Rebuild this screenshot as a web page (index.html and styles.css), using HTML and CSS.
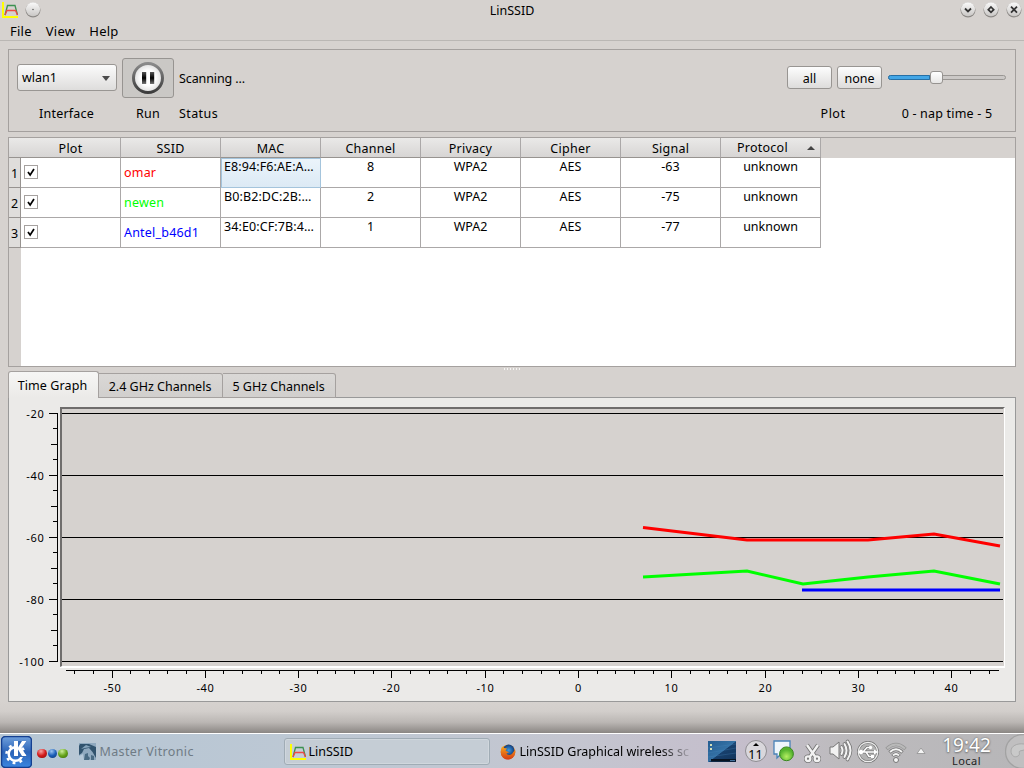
FILE: index.html
```html
<!DOCTYPE html>
<html lang="en">

<head>
    <meta charset="UTF-8">
    <meta name="viewport" content="width=device-width, initial-scale=1.0">
    <title>LinSSID</title>
    <link rel="stylesheet" href="styles.css">
</head>

<body>
    <svg class="defs" width="0" height="0">
        <defs>
            <symbol id="app-icon" viewBox="0 0 16 16">
                <path d="M1 0V15H16" fill="none" stroke="#ff0" stroke-width="2" />
                <path d="M3 13L5.5 3.5H13L15.500 13" fill="none" stroke="#3c9150" stroke-width="1.3" />
                <path d="M3 13L5 8.500H13.500L15.500 13" fill="none" stroke="#ee4a45" stroke-width="1.3" />
            </symbol>
            <linearGradient id="knob" x2="0" y2="1">
                <stop offset="0" stop-color="#fafafa" />
                <stop offset="1" stop-color="#c9c7c5" />
            </linearGradient>
            <linearGradient id="ring" x2="0" y2="1">
                <stop offset="0" stop-color="#8a8a8a" />
                <stop offset="1" stop-color="#3c3c3c" />
            </linearGradient>
            <radialGradient id="face">
                <stop offset="0.5" stop-color="#fff" />
                <stop offset="1" stop-color="#ddd" />
            </radialGradient>
            <linearGradient id="bars" x2="0" y2="1">
                <stop offset="0" stop-color="#555" />
                <stop offset="0.5" stop-color="#000" />
                <stop offset="1" stop-color="#777" />
            </linearGradient>
            <linearGradient id="desk" x2="1" y2="1">
                <stop offset="0" stop-color="#245d91" />
                <stop offset="0.5" stop-color="#3471a5" />
                <stop offset="0.52" stop-color="#17406d" />
                <stop offset="1" stop-color="#123258" />
            </linearGradient>
            <radialGradient id="globe">
                <stop offset="0" stop-color="#3e9be0" />
                <stop offset="1" stop-color="#123c7c" />
            </radialGradient>
            <linearGradient id="fox" x2="0" y2="1">
                <stop offset="0" stop-color="#f7a51c" />
                <stop offset="1" stop-color="#d43b12" />
            </linearGradient>
            <radialGradient id="green" cy="0.7">
                <stop offset="0" stop-color="#b4ee62" />
                <stop offset="1" stop-color="#55b32e" />
            </radialGradient>
        </defs>
    </svg>

    <div class="window">
        <div class="titlebar">
            <div class="title-left">
                <svg class="app-icon" width="16" height="16"><use href="#app-icon" /></svg>
                <svg width="16" height="17" viewBox="0 0 16 17">
                    <circle cx="8" cy="9" r="7.500" fill="#8d8a87" />
                    <circle cx="8" cy="8.300" r="7" fill="url(#knob)" />
                    <circle cx="8" cy="8.500" r="0.700" fill="#444" />
                </svg>
            </div>
            <div class="title">LinSSID</div>
            <div class="title-right">
                <svg width="16" height="17" viewBox="0 0 16 17">
                    <circle cx="8" cy="9" r="7.500" fill="#8d8a87" />
                    <circle cx="8" cy="8.300" r="7" fill="url(#knob)" />
                    <path d="M5 7.500L8 10.500L11 7.500" fill="none" stroke="#333" stroke-width="1.800" />
                </svg>
                <svg width="16" height="17" viewBox="0 0 16 17">
                    <circle cx="8" cy="9" r="7.500" fill="#8d8a87" />
                    <circle cx="8" cy="8.300" r="7" fill="url(#knob)" />
                    <path d="M8 6L10.700 8.700L8 11.400L5.300 8.700Z" fill="none" stroke="#333" stroke-width="1.700" />
                </svg>
                <svg width="16" height="17" viewBox="0 0 16 17">
                    <circle cx="8" cy="9" r="7.500" fill="#8d8a87" />
                    <circle cx="8" cy="8.300" r="7" fill="url(#knob)" />
                    <path d="M5 5.700L11 11.700M11 5.700L5 11.700" fill="none" stroke="#333" stroke-width="1.800" />
                </svg>
            </div>
        </div>

        <div class="menubar">
            <span>File</span>
            <span>View</span>
            <span>Help</span>
        </div>

        <div class="controls">
            <div class="control iface">
                <div class="control-top"><div class="combo">wlan1<i class="arrow"></i></div></div>
                <div class="control-label">Interface</div>
            </div>
            <div class="control run">
                <div class="control-top">
                    <div class="run-button">
                        <svg width="32" height="32" viewBox="0 0 32 32">
                            <circle cx="16" cy="16" r="14.500" fill="url(#face)" stroke="url(#ring)" stroke-width="3" />
                            <path d="M10 10h4.200v12H10zM18 10h4.200v12H18z" fill="url(#bars)" />
                        </svg>
                    </div>
                </div>
                <div class="control-label">Run</div>
            </div>
            <div class="control status">
                <div class="control-top">Scanning ...</div>
                <div class="control-label">Status</div>
            </div>
            <div class="control plot">
                <div class="control-top">
                    <div class="button">all</div>
                    <div class="button">none</div>
                </div>
                <div class="control-label">Plot</div>
            </div>
            <div class="control nap">
                <div class="control-top">
                    <div class="slider">
                        <div class="slider-fill"></div>
                        <div class="slider-handle"></div>
                    </div>
                </div>
                <div class="control-label">0 - nap time - 5</div>
            </div>
        </div>

        <div class="table">
            <div class="row header">
                <div class="num"></div>
                <div>Plot</div>
                <div>SSID</div>
                <div>MAC</div>
                <div>Channel</div>
                <div>Privacy</div>
                <div>Cipher</div>
                <div>Signal</div>
                <div class="sorted">Protocol<i class="sort"></i></div>
            </div>
            <div class="row">
                <div class="num">1</div>
                <div class="check"><svg class="box" width="14" height="14" viewBox="0 0 14 14"><path d="M3.500 7L6 10.500L10.500 3.500" /></svg></div>
                <div class="ssid red">omar</div>
                <div class="mac selected">E8:94:F6:AE:A…</div>
                <div>8</div>
                <div>WPA2</div>
                <div>AES</div>
                <div>-63</div>
                <div>unknown</div>
            </div>
            <div class="row">
                <div class="num">2</div>
                <div class="check"><svg class="box" width="14" height="14" viewBox="0 0 14 14"><path d="M3.500 7L6 10.500L10.500 3.500" /></svg></div>
                <div class="ssid green">newen</div>
                <div class="mac">B0:B2:DC:2B:…</div>
                <div>2</div>
                <div>WPA2</div>
                <div>AES</div>
                <div>-75</div>
                <div>unknown</div>
            </div>
            <div class="row">
                <div class="num">3</div>
                <div class="check"><svg class="box" width="14" height="14" viewBox="0 0 14 14"><path d="M3.500 7L6 10.500L10.500 3.500" /></svg></div>
                <div class="ssid blue">Antel_b46d1</div>
                <div class="mac">34:E0:CF:7B:4…</div>
                <div>1</div>
                <div>WPA2</div>
                <div>AES</div>
                <div>-77</div>
                <div>unknown</div>
            </div>
            <div class="table-rest"></div>
        </div>

        <div class="splitter"></div>

        <div class="tabs">
            <div class="tab active">Time Graph</div>
            <div class="tab tab-24">2.4 GHz Channels</div>
            <div class="tab tab-5">5 GHz Channels</div>
        </div>
        <div class="pane">
            <svg id="chart" width="1006" height="303" viewBox="9 398 1006 303">
                <rect x="60" y="407" width="945" height="261" fill="#fff" />
                <path d="M60 407H1005L1003 409H62V666L60 667Z" fill="#6f6d6c" />
                <rect x="62" y="409" width="942" height="257" fill="#d6d2cf" />
                <g id="axes"></g>
                <g class="lines">
                    <polyline points="643,527.500 747,540 868,540 934,534 1000,546" stroke="#f00" />
                    <polyline points="643,577 747,571 803,584 868,577 934,571 1000,584" stroke="#0f0" />
                    <polyline points="802,590 1000,590" stroke="#00f" />
                </g>
            </svg>
        </div>
        <div class="shadow"></div>
    </div>

    <div class="taskbar">
        <svg class="kmenu" width="31" height="32" viewBox="0 0 31 32">
            <defs>
                <linearGradient id="kbg" x2="0" y2="1">
                    <stop offset="0" stop-color="#6fa0dc" />
                    <stop offset="0.500" stop-color="#2a63b8" />
                    <stop offset="1" stop-color="#3b86e0" />
                </linearGradient>
            </defs>
            <rect x="0.500" y="0.500" width="30" height="31" rx="4" fill="url(#kbg)" stroke="#143f90" stroke-width="1.500" />
            <circle cx="14.500" cy="18" r="6.800" fill="none" stroke="#fff" stroke-width="2.500" />
            <circle cx="14.500" cy="18" r="9" fill="none" stroke="#fff" stroke-width="2.500" stroke-dasharray="2.800 4.270" />
            <path d="M14 5H26L20 12L26 21H14Z" fill="#3269b8" />
            <path d="M13 5H17V11.500L21 5H25.500L20.500 12L25.500 20H21L17 13.500V20H13Z" fill="#fff" />
        </svg>
        <div class="dots"><i class="dot dot-red"></i><i class="dot dot-blue"></i><i class="dot dot-green"></i></div>
        <div class="task inactive">
            <svg width="17" height="17" viewBox="0 0 17 17">
                <rect width="17" height="17" fill="#8fa9bf" />
                <path d="M1 1H10L17 4V15L13.500 9L10 5L5 6L3 10L0 12V3Z" fill="#31536e" />
                <path d="M5 17L6 11L9 10L9 13L11 15L10 17ZM12 17L12 12L15 13V17Z" fill="#496b84" />
                <path d="M2 6L7 2L12 4L6 5Z" fill="#86a4bb" />
                <path d="M0 13L4 11L5 17H0Z" fill="#b5c8d8" />
            </svg>
            <span>Master Vitronic</span>
        </div>
        <div class="task current">
            <svg width="16" height="16"><use href="#app-icon" /></svg>
            <span>LinSSID</span>
        </div>
        <div class="task browser">
            <svg width="16" height="16" viewBox="0 0 16 16">
                <circle cx="8" cy="8" r="7.300" fill="url(#fox)" />
                <circle cx="8.700" cy="6.200" r="5.600" fill="url(#globe)" />
                <path d="M1 6L2 2.500L4 4L7 4.500L5.500 6.500L9 8.500L6.500 9.500C8 12 12 11 13.300 8L15.300 6C16 11 12 15.500 8 15.500C3 15.500 0 11 1 6Z" fill="url(#fox)" />
            </svg>
            <span>LinSSID Graphical wireless sc</span>
        </div>
        <div class="tray">
            <svg width="28" height="21" viewBox="0 0 28 21">
                <rect width="28" height="21" fill="url(#desk)" />
                <path d="M0 7L28 3M0 12L28 7M0 16L28 12" stroke="#4a8ac0" stroke-width="0.700" opacity="0.400" />
                <rect x="3" y="18" width="25" height="2.500" fill="#071321" />
                <path d="M2 4h2M2 8h2" stroke="#d3dfb9" stroke-width="2" />
                <path d="M1 19.500h2M22 19.500h5" stroke="#41719c" />
            </svg>
            <div class="pager">
                <svg width="8" height="4" viewBox="0 0 8 4"><path d="M4 0L7 3H1Z" fill="#000" /></svg>
                <span>11</span>
            </div>
            <svg class="chat" width="22" height="22" viewBox="0 0 22 22">
                <path d="M1 1H17V14H8L4 18V14H1Z" fill="#eef5fb" stroke="#4b83b8" stroke-width="1.300" />
                <circle cx="13.500" cy="13.800" r="6.900" fill="url(#green)" stroke="#3a8720" />
            </svg>
            <svg class="scissors" width="17" height="20" viewBox="0 0 17 20">
                <g fill="none" stroke="#727272" stroke-width="4">
                    <path d="M3 2L11 13.500M14 2L6 13.500" />
                    <circle cx="4" cy="15.700" r="2.300" />
                    <circle cx="13" cy="15.700" r="2.300" />
                </g>
                <g fill="none" stroke="#f2f2f2" stroke-width="2.400">
                    <path d="M3 2L11 13.500M14 2L6 13.500" />
                    <circle cx="4" cy="15.700" r="2.300" />
                    <circle cx="13" cy="15.700" r="2.300" />
                </g>
            </svg>
            <svg class="volume" width="24" height="24" viewBox="0 0 24 24">
                <path d="M1 8H4L10 3V20L4 15H1Z" fill="#f2f2f2" stroke="#777" />
                <g fill="none" stroke="#777" stroke-width="3.600" stroke-linecap="round">
                    <path d="M12.500 8Q14.500 11.500 12.500 15M15.500 5Q19.500 11.500 15.500 18M18.500 2.500Q24.500 11.500 18.500 20.500" />
                </g>
                <g fill="none" stroke="#f4f4f4" stroke-width="2" stroke-linecap="round">
                    <path d="M12.500 8Q14.500 11.500 12.500 15M15.500 5Q19.500 11.500 15.500 18M18.500 2.500Q24.500 11.500 18.500 20.500" />
                </g>
            </svg>
            <svg class="usb" width="22" height="22" viewBox="0 0 22 22">
                <circle cx="11" cy="11" r="9.700" fill="#b2b2b2" stroke="#737373" stroke-width="2.500" />
                <circle cx="11" cy="11" r="9.700" fill="none" stroke="#eee" stroke-width="1.300" />
                <g fill="none" stroke="#777" stroke-width="3">
                    <path d="M2 11H18M6 11L10 6.500H13M9 11L12 15.500H15" />
                </g>
                <g fill="none" stroke="#fff" stroke-width="1.400">
                    <path d="M2 11H18M6 11L10 6.500H13M9 11L12 15.500H15" />
                </g>
                <path d="M17 8.500L21 11L17 13.500Z" fill="#fff" />
                <circle cx="4" cy="11" r="2.200" fill="#fff" />
                <circle cx="13.500" cy="6.500" r="1.700" fill="#fff" />
                <path d="M14 14h3v3h-3z" fill="#fff" />
            </svg>
            <svg class="wifi" width="22" height="22" viewBox="0 0 22 22">
                <g fill="none" stroke="#777" stroke-width="3.400">
                    <path d="M1.500 7Q11 -2 20.500 7" stroke="#969696" />
                    <path d="M4.500 10.500Q11 4 17.500 10.500M7.500 14Q11 10 14.500 14" />
                </g>
                <g fill="none" stroke-width="2">
                    <path d="M2 6.500Q11 -1.500 20 6.500" stroke="#b9b9b9" />
                    <path d="M5 10Q11 4.500 17 10M8 13.500Q11 10.500 14 13.500" stroke="#f3f3f3" />
                </g>
                <circle cx="11" cy="18" r="2.500" fill="#f5f5f5" stroke="#777" />
            </svg>
            <svg class="expand" width="10" height="8" viewBox="0 0 10 8"><path d="M5 1L9 6.500H1Z" fill="#f5f5f5" stroke="#888" stroke-width="0.700" /></svg>
        </div>
        <div class="clock">
            <div class="time">19:42</div>
            <div class="zone">Local</div>
        </div>
        <svg class="cashew" width="19" height="34" viewBox="0 0 19 34">
            <circle cx="17.500" cy="17.500" r="17" fill="#c0bfc0" stroke="#a2a2a2" stroke-width="1.300" />
            <path d="M19 10C12 9 6 12 6 17C6 22 10 24 13 22C16 20 13 18 15 17L19 16" fill="#c9c9c9" stroke="#a9a9a9" />
        </svg>
    </div>

    <script>
        const axes = document.getElementById('axes');
        let shapes = '';

        function line(x1, y1, x2, y2) {
            shapes += `<line x1="${x1}" y1="${y1}" x2="${x2}" y2="${y2}" />`;
        }

        // signal axis and its grid lines, 62px per 20 dB
        line(57.5, 413, 57.5, 662);
        for (let i = 0; i <= 16; i++) {
            const y = Math.floor(413 + i * 15.5) + 0.5;
            const length = i % 4 === 0 ? 8 : i % 2 === 0 ? 6 : 4;
            line(57 - length, y, 57, y);
            if (i % 4 === 0) {
                line(62, y, 1003, y);
                shapes += `<text x="44.500" y="${y + 4.5}" text-anchor="end">${-20 - i * 5}</text>`;
            }
        }

        // time axis, a tick every 2 seconds
        line(66, 670.5, 999, 670.5);
        for (let t = -54; t <= 44; t += 2) {
            const x = Math.round(578 + t * 9.33) + 0.5;
            const major = t % 10 === 0;
            line(x, 671, x, major ? 678 : 674);
            if (major) {
                shapes += `<text x="${x}" y="692" text-anchor="middle">${t}</text>`;
            }
        }
        axes.innerHTML = shapes;
    </script>
</body>

</html>
```
FILE: styles.css
```css
* {
    box-sizing: border-box;
}

body {
    font-family: "Noto Sans", "Open Sans", sans-serif;
    font-size: 12.5px;
    line-height: 18px;
    margin: 0;
    width: 1024px;
    height: 768px;
    overflow: hidden;
    background-color: #d6d2cf;
    color: #000;
    display: flex;
    flex-direction: column;
}

svg {
    display: block;
    flex: none;
}

.defs {
    position: absolute;
}

.window {
    height: 733px;
    display: flex;
    flex-direction: column;
}

.titlebar {
    height: 21px;
    display: grid;
    grid-template-columns: 1fr auto 1fr;
    padding: 1px 2px 0 2px;
}

.title {
    padding-top: 1px;
}

.title-left,
.title-right {
    display: flex;
    gap: 7px;
}

.title-right {
    justify-content: flex-end;
}

.app-icon {
    margin-top: 1px;
}

.menubar {
    height: 20px;
    display: flex;
    gap: 14px;
    padding: 1px 0 0 10px;
    font-size: 13px;
    letter-spacing: 0.25px;
    border-bottom: 1px solid #bab7b4;
}

/* controls */
.controls {
    height: 83px;
    margin: 8px 8px 5px;
    border: 1px solid #a4a09e;
    display: flex;
    padding: 8px 9px 0 8px;
}

.control-top {
    height: 40px;
    display: flex;
    align-items: center;
}

.control-label {
    margin-top: 7px;
    text-align: center;
    letter-spacing: 0.2px;
}

.iface {
    width: 99px;
    margin-right: 6px;
}

.run {
    width: 52px;
    margin-right: 5px;
}

.status .control-top {
    padding-top: 2px;
    letter-spacing: -0.1px;
}

.status .control-label {
    text-align: left;
    letter-spacing: 0.4px;
}

.plot {
    margin-left: auto;
    margin-right: 6px;
}

.plot .control-label {
    padding-right: 3px;
    letter-spacing: 0.5px;
}

.nap {
    width: 118px;
}

.plot .control-top {
    gap: 5px;
}

.combo {
    width: 100px;
    height: 27px;
    flex: none;
    display: flex;
    align-items: center;
    justify-content: space-between;
    padding: 1px 6px 0 4px;
    margin-top: -1px;
    border: 1px solid #999693;
    border-radius: 3px;
    background: linear-gradient(#fbfbfb, #dedddc);
}

.arrow {
    border: 4px solid transparent;
    border-top: 5px solid #4b4b4b;
    border-bottom: 0;
}

.run-button {
    width: 52px;
    height: 40px;
    display: flex;
    align-items: center;
    justify-content: center;
    border: 1px solid #979491;
    border-radius: 3px;
    background-color: #cac8c5;
}

.button {
    width: 45px;
    height: 23px;
    line-height: 23px;
    margin-top: -1px;
    text-align: center;
    border: 1px solid #989592;
    border-radius: 3px;
    background: linear-gradient(#fdfdfd, #dddcdb);
}

.slider {
    width: 118px;
    height: 5px;
    margin-top: -1px;
    display: flex;
    align-items: center;
    border: 1px solid #999693;
    border-radius: 3px;
    background-color: #cbc8c6;
}

.slider-fill {
    width: 42px;
    height: 5px;
    flex: none;
    margin-left: -1px;
    border: 1px solid #2670a6;
    border-radius: 3px 0 0 3px;
    background-color: #43a6e6;
}

.slider-handle {
    width: 13px;
    height: 13px;
    flex: none;
    border: 1px solid #969390;
    border-radius: 3px;
    background: linear-gradient(#fff, #e7e6e5);
}

/* network table */
.table {
    height: 230px;
    margin: 0 8px;
    display: flex;
    flex-direction: column;
    border: 1px solid #a5a19f;
    background-color: #fff;
}

.row {
    height: 30px;
    display: grid;
    grid-template-columns: 12px repeat(8, 100px);
    flex: none;
}

.row > div {
    border-right: 1px solid #aba8a8;
    border-bottom: 1px solid #aba8a8;
    text-align: center;
    white-space: nowrap;
    overflow: hidden;
}

.row .num {
    background-color: #dfdddb;
    border-color: #979390;
    line-height: 31px;
}

.header {
    height: 20px;
    background-color: #d6d2cf;
}

.row.header > div {
    line-height: 20px;
    padding-top: 1px;
    letter-spacing: 0.25px;
    background: linear-gradient(#eae9e8, #d7d5d4);
    border-bottom-color: #979390;
}

.row.header .num {
    border-right: 0;
}

.row .sorted {
    display: flex;
    align-items: center;
    padding-left: 16px;
}

.sort {
    margin-left: auto;
    margin-right: 5px;
    border: 4px solid transparent;
    border-bottom: 4px solid #444;
    border-top: 0;
}

.row .check {
    padding: 7px 3px;
}

.box {
    border: 1px solid #a5a19f;
    background-color: #fff;
}

.box path {
    fill: none;
    stroke: #000;
    stroke-width: 2;
}

.row .ssid {
    text-align: left;
    padding-left: 3px;
    line-height: 29px;
    letter-spacing: 0.2px;
}

.row .mac {
    text-align: left;
    padding-left: 3px;
    letter-spacing: 0.1px;
}

.row .selected {
    padding-left: 2px;
    line-height: 16px;
    background: linear-gradient(#ebf4fb, #dceaf5);
    border: 1px solid #a4c4dc;
}

.red {
    color: #f00;
}

.green {
    color: #0f0;
}

.blue {
    color: #00f;
}

.table-rest {
    flex: 1;
    width: 12px;
    background-color: #d6d2cf;
}

.splitter {
    height: 4px;
    width: 18px;
    margin: 0 auto;
    background: radial-gradient(circle, #f5f4f3 0.8px, transparent 1px) 0 0 / 3px 4px;
}

/* tabs */
.tabs {
    height: 27px;
    display: flex;
    align-items: flex-end;
    margin: 0 8px -1px;
    position: relative;
}

.tab {
    height: 25px;
    line-height: 25px;
    text-align: center;
    padding-right: 1px;
    border: 1px solid #a5a19f;
    border-left: 0;
    border-radius: 0 3px 0 0;
    background: linear-gradient(#dad8d6, #d1cfcd);
}

.tab.active {
    width: 91px;
    height: 27px;
    line-height: 28px;
    padding-right: 2px;
    letter-spacing: 0.1px;
    border-left: 1px solid #a5a19f;
    border-bottom: 0;
    border-radius: 3px 3px 0 0;
    background: linear-gradient(#f6f6f5, #ebeae8);
}

.tab-24 {
    width: 124px;
}

.tab-5 {
    width: 113px;
}

.pane {
    height: 305px;
    margin: 0 8px;
    border: 1px solid #999;
    background-color: #ebeae8;
}

#axes line {
    stroke: #000;
    stroke-width: 1;
    shape-rendering: crispEdges;
}

#axes text {
    font-size: 11px;
    letter-spacing: 0.7px;
}

.lines polyline {
    fill: none;
    stroke-width: 3;
}

.shadow {
    flex: 1;
    background: linear-gradient(#d6d2cf, #d2cecb 30%, #bbb7b4 65%, #8a8683);
}

/* taskbar */
.taskbar {
    height: 35px;
    display: flex;
    align-items: center;
    border-top: 1px solid #fff;
    background: linear-gradient(90deg, #b5c6d4, #bdc8d4 30%, #c4c6d0 55%, #c5becc 72%, #bdbbbe 82%, #b7b6b8);
}

.kmenu {
    margin: 1px 0 0 1px;
}

.dots {
    display: flex;
    gap: 1px;
    margin: 5px 11px 0 5px;
}

.dot {
    width: 9.5px;
    height: 9.5px;
    border-radius: 50%;
}

.dot-red {
    background: radial-gradient(circle at 40% 25%, #f6a4a4, #d41b1b 50%, #820d0d);
}

.dot-blue {
    background: radial-gradient(circle at 40% 25%, #9cc4f0, #1c5fb8 50%, #0c3470);
}

.dot-green {
    background: radial-gradient(circle at 40% 25%, #cdee9c, #66a51b 50%, #386509);
}

.task {
    height: 27px;
    display: flex;
    align-items: center;
    gap: 4px;
    padding-top: 1px;
    white-space: nowrap;
}

.inactive {
    width: 205px;
    letter-spacing: 0.35px;
    color: #6f7b85;
}

.current {
    width: 206px;
    padding-left: 5px;
    gap: 3px;
    border: 1px solid #a0acb5;
    border-radius: 3px;
    background-color: #c5cdd5;
    box-shadow: inset 0 0 0 1px #d0d7dd;
}

.browser {
    width: 192px;
    margin-left: 10px;
    -webkit-mask-image: linear-gradient(90deg, #000 160px, transparent 194px);
    mask-image: linear-gradient(90deg, #000 160px, transparent 194px);
}

.tray {
    display: flex;
    align-items: center;
    margin-left: 16px;
}

.pager {
    width: 22px;
    height: 22px;
    margin-left: 9px;
    border: 1px solid #8f8d92;
    border-radius: 50%;
    background-color: #d9d7dc;
    display: flex;
    flex-direction: column;
    align-items: center;
    padding-top: 2px;
    line-height: 15px;
}

.chat {
    margin-left: 6px;
}

.scissors {
    margin: 3px 0 0 9px;
}

.volume {
    margin-left: 8px;
}

.usb {
    margin: 1px 0 0 4px;
}

.wifi {
    margin: 4px 0 0 6px;
}

.expand {
    margin-left: 9px;
}

.clock {
    width: 50px;
    margin-left: 16px;
    text-align: center;
}

.time {
    font-size: 19px;
    line-height: 19px;
    color: #fff;
    text-shadow: 0 0 2px #666, 0 1px 2px #777;
}

.zone {
    font-size: 11px;
    line-height: 11px;
    letter-spacing: 0.5px;
    color: #222;
}

.cashew {
    margin-left: auto;
}
```
